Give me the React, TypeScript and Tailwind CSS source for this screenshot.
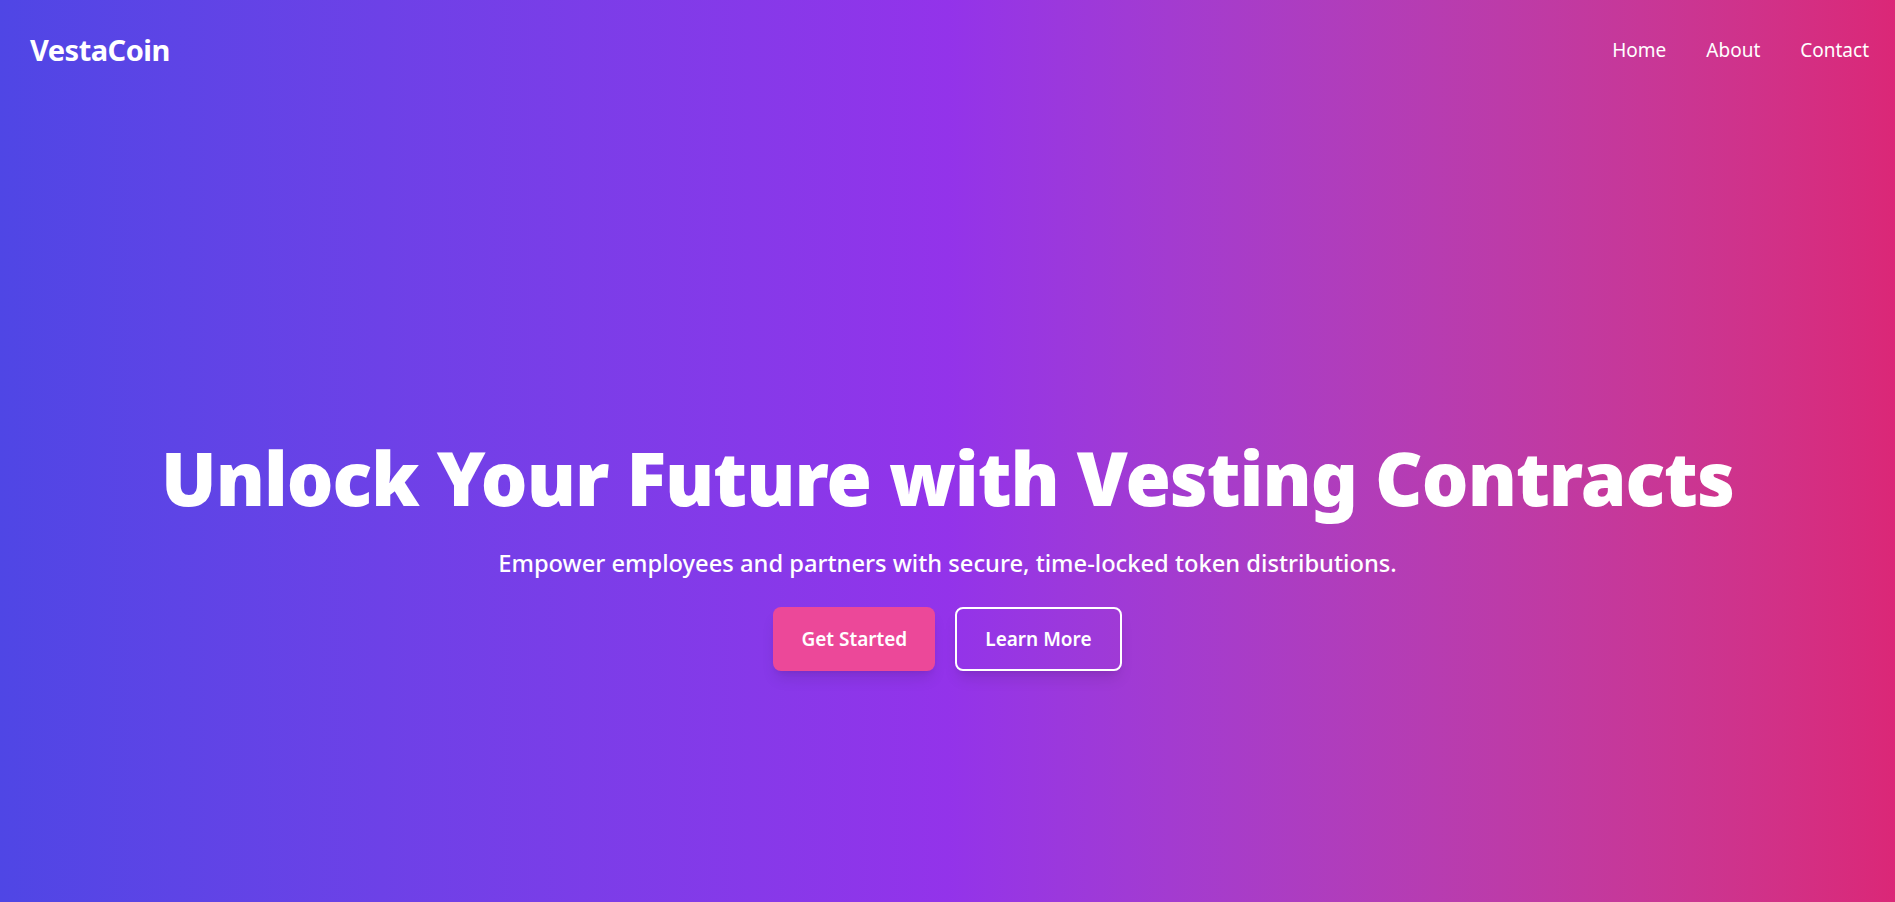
import React from "react";

const font = { fontFamily: '"Noto Sans", "Open Sans", sans-serif' };

export default function App() {
  return (
    <div
      className="min-h-screen w-full bg-linear-to-r from-[#4f46e5] via-[#9333ea] to-[#db2777] text-white"
      style={font}
    >
      {/* header */}
      <header className="flex items-center justify-between pl-[30px] pr-[26px] py-8">
        <a href="#" className="text-[29px] font-bold leading-9 tracking-[-0.5px]">
          VestaCoin
        </a>
        <nav className="flex items-center gap-10 text-[19px] leading-7">
          <a href="#">Home</a>
          <a href="#">About</a>
          <a href="#">Contact</a>
        </nav>
      </header>

      {/* hero */}
      <section className="flex min-h-screen flex-col items-center justify-center px-6 pt-[10px] text-center">
        <h1 className="text-[73.5px] font-black leading-none tracking-[-1px]">
          Unlock Your Future with Vesting Contracts
        </h1>
        <p className="mt-[32px] text-[23.7px] font-medium leading-8">
          Empower employees and partners with secure, time-locked token distributions.
        </p>
        <div className="mt-7 flex items-center gap-5">
          <button
            type="button"
            className="rounded-lg bg-[#ec4899] px-[28px] py-[18px] text-[19px] font-semibold leading-7 shadow-lg"
          >
            Get Started
          </button>
          <button
            type="button"
            className="rounded-lg border-2 border-white px-[28px] py-[16px] text-[19px] font-semibold leading-7 shadow-lg"
          >
            Learn More
          </button>
        </div>
      </section>
    </div>
  );
}
